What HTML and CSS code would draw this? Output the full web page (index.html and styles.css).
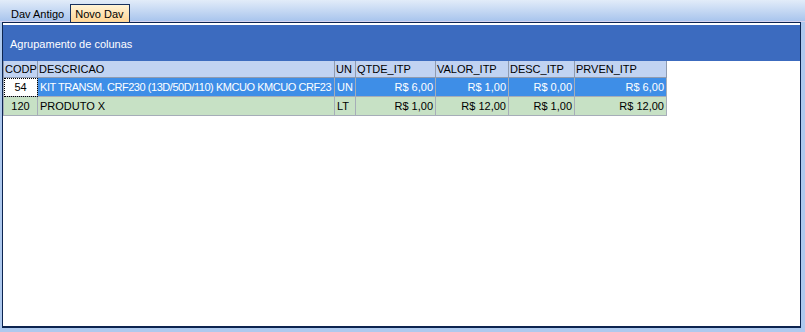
FILE: index.html
```html
<!DOCTYPE html>
<html lang="pt">
<head>
    <meta charset="UTF-8">
    <title>Dav</title>
    <link rel="stylesheet" href="styles.css">
</head>
<body>
    <div class="tabstrip">
        <div class="tab">Dav Antigo</div>
        <div class="tab active">Novo Dav</div>
    </div>
    <div class="panel">
        <div class="groupbar">Agrupamento de colunas</div>
        <table class="grid">
            <colgroup>
                <col class="c-codp">
                <col class="c-desc">
                <col class="c-un">
                <col class="c-qtde">
                <col class="c-valor">
                <col class="c-descitp">
                <col class="c-prven">
            </colgroup>
            <tr class="head">
                <td>CODP</td>
                <td>DESCRICAO</td>
                <td>UN</td>
                <td>QTDE_ITP</td>
                <td>VALOR_ITP</td>
                <td>DESC_ITP</td>
                <td>PRVEN_ITP</td>
            </tr>
            <tr class="selected">
                <td class="code focus">54</td>
                <td class="clip">KIT TRANSM. CRF230 (13D/50D/110) KMCUO KMCUO CRF23</td>
                <td>UN</td>
                <td class="num">R$ 6,00</td>
                <td class="num">R$ 1,00</td>
                <td class="num">R$ 0,00</td>
                <td class="num">R$ 6,00</td>
            </tr>
            <tr class="alt">
                <td class="code">120</td>
                <td>PRODUTO X</td>
                <td>LT</td>
                <td class="num">R$ 1,00</td>
                <td class="num">R$ 12,00</td>
                <td class="num">R$ 1,00</td>
                <td class="num">R$ 12,00</td>
            </tr>
        </table>
    </div>
</body>
</html>
```

FILE: styles.css
```css
body{
    margin: 0;
    width: 805px;
    height: 332px;
    overflow: hidden;
    background: linear-gradient(#dce8f8, #aec9ee 20px, #aec9ee);
    font-family: "Liberation Sans", Arial, sans-serif;
    font-size: 11px;
    color: #000;
}
.tabstrip{
    height: 21px;
    display: flex;
    align-items: flex-end;
    padding-left: 5px;
    border-bottom: 1px solid #d6d2ee;
    background: linear-gradient(#e2ecf9, #a9c5ed);
}
.tab{
    height: 17px;
    line-height: 20px;
    padding: 0 5px 0 6px;
}
.tab.active{
    margin-left: 1px;
    height: 17px;
    line-height: 19px;
    padding: 0 5px 0 4px;
    border: 1px solid #16305e;
    border-bottom: none;
    background: linear-gradient(#fff3d6, #ffd595);
    position: relative;
    top: 1px;
}
.panel{
    margin-left: 2px;
    width: 797px;
    height: 301px;
    border: 1px solid #0c2450;
    border-bottom-width: 2px;
    padding-top: 2px;
    background: #fff;
}
.groupbar{
    height: 36px;
    line-height: 38px;
    padding-left: 7px;
    background: #3c6bbf;
    color: #fff;
}
.grid{
    table-layout: fixed;
    border-collapse: collapse;
    width: 663px;
}
.c-codp{ width: 34px; }
.c-desc{ width: 297px; }
.c-un{ width: 21px; }
.c-qtde{ width: 80px; }
.c-valor{ width: 73px; }
.c-descitp{ width: 66px; }
.c-prven{ width: 92px; }
.grid td{
    padding: 0 2px;
    border: 1px solid #a6adb8;
    white-space: nowrap;
    overflow: hidden;
}
.grid tr.head td{
    height: 16px;
    padding: 0 1px;
    background: #c1d3f2;
    border-color: #8f9bb0;
    border-top: none;
}
.grid tr.selected td,
.grid tr.alt td{
    height: 18px;
}
.grid tr.selected td{
    background: #3e8ee7;
    color: #fff;
}
.grid tr.alt td{
    background: #c7e1c5;
}
.grid td.num{
    text-align: right;
}
.grid td.code{
    text-align: center;
}
.grid tr.selected td.focus{
    background: #fff;
    color: #000;
    outline: 1px dotted #000;
    outline-offset: -1px;
}
.clip{
    letter-spacing: -0.45px;
}
```
